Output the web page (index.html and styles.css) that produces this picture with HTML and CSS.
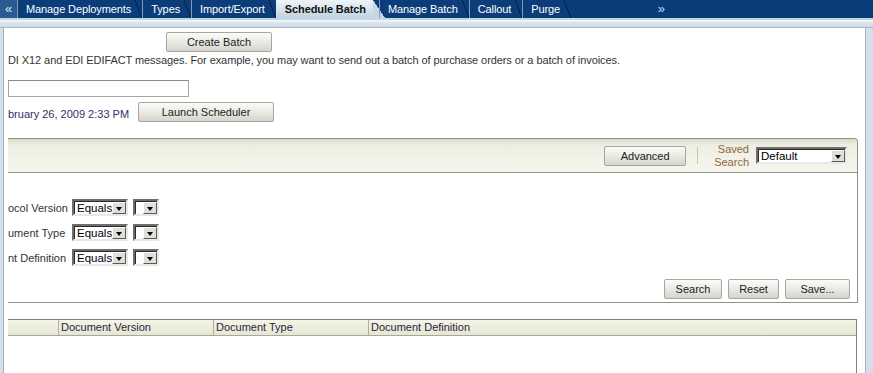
FILE: index.html
```html
<!DOCTYPE html>
<html lang="en">

<head>
    <meta charset="UTF-8">
    <title>Schedule Batch</title>
    <link rel="stylesheet" href="styles.css">
</head>

<body>
    <div class="tabbar">
        <span class="scroll-left">&laquo;</span>
        <span class="tab">Manage Deployments</span>
        <span class="tab">Types</span>
        <span class="tab">Import/Export</span>
        <span class="tab active">Schedule Batch</span>
        <span class="tab">Manage Batch</span>
        <span class="tab">Callout</span>
        <span class="tab">Purge</span>
        <span class="scroll-right">&raquo;</span>
    </div>
    <div class="band"></div>

    <div class="frame">
        <div class="content">
            <div class="create-row">
                <button class="btn create">Create Batch</button>
            </div>
            <p class="desc">DI X12 and EDI EDIFACT messages. For example, you may want to send out a batch of purchase orders or a batch of invoices.</p>
            <div class="text-input"></div>
            <div class="date-row">
                <span class="date">bruary 26, 2009 2:33 PM</span>
                <button class="btn launch">Launch Scheduler</button>
            </div>

            <div class="panel">
                <div class="panel-head">
                    <button class="btn advanced">Advanced</button>
                    <span class="sep"></span>
                    <span class="saved">Saved<br>Search</span>
                    <div class="select wide">
                        <span class="val">Default</span>
                        <span class="arrow"></span>
                    </div>
                </div>
                <div class="panel-body">
                    <div class="crit">
                        <span class="label">ocol Version</span>
                        <div class="select op"><span class="val">Equals</span><span class="arrow"></span></div>
                        <div class="select empty"><span class="val"></span><span class="arrow"></span></div>
                    </div>
                    <div class="crit">
                        <span class="label">ument Type</span>
                        <div class="select op"><span class="val">Equals</span><span class="arrow"></span></div>
                        <div class="select empty"><span class="val"></span><span class="arrow"></span></div>
                    </div>
                    <div class="crit">
                        <span class="label">nt Definition</span>
                        <div class="select op"><span class="val">Equals</span><span class="arrow"></span></div>
                        <div class="select empty"><span class="val"></span><span class="arrow"></span></div>
                    </div>
                    <div class="actions">
                        <button class="btn search">Search</button>
                        <button class="btn reset">Reset</button>
                        <button class="btn save">Save...</button>
                    </div>
                </div>
            </div>

            <div class="results">
                <div class="results-head">
                    <span class="col first"></span>
                    <span class="col">Document Version</span>
                    <span class="col">Document Type</span>
                    <span class="col last">Document Definition</span>
                </div>
                <div class="results-body"></div>
            </div>
        </div>
    </div>
</body>

</html>
```

FILE: styles.css
```css
* {
    box-sizing: border-box;
    margin: 0;
    padding: 0;
}

body {
    width: 873px;
    height: 373px;
    overflow: hidden;
    background: #d3e0ea;
    font-family: 'Liberation Sans', Arial, sans-serif;
    font-size: 11px;
    color: #333;
}

/* top tabs */
.tabbar {
    display: flex;
    height: 18px;
    background: #0b3d7a;
    color: #fff;
    font-size: 11px;
    line-height: 18px;
}

.scroll-left {
    width: 17px;
    text-align: center;
    background: #2a5a90;
    color: #dbe6f2;
    font-size: 13px;
}

.tab {
    position: relative;
    height: 18px;
    padding: 0 11px 0 8px;
    border-left: 1px solid #7d9ab8;
    white-space: nowrap;
    letter-spacing: -0.1px;
}

.tab::after {
    content: "";
    position: absolute;
    top: 0;
    right: 0;
    width: 7px;
    height: 18px;
    background: linear-gradient(to top right, transparent calc(50% - 0.8px), #021a38 50%, transparent calc(50% + 0.8px));
}

.tab.active {
    margin-right: 6px;
    padding: 0 7px 0 9px;
    border-left: none;
    font-weight: bold;
    color: #111;
    background: linear-gradient(#eef4f8, #bfd3e0);
}

.tab.active::after {
    right: -12px;
    width: 12px;
    background: linear-gradient(to top right, #c4d7e3 50%, #0b3d7a 50%);
}

.scroll-right {
    margin-left: auto;
    margin-right: 208px;
    color: #c8d8ea;
    font-size: 13px;
}

.band {
    height: 10px;
    background: linear-gradient(#c5d5e2 0, #c5d5e2 2px, #f4f7fa 2px, #f4f7fa 3px, #dde6ee 4px, #cfdbe5 9px, #a9b9c8 9px);
}

/* main content */
.frame {
    padding: 0 7px 0 3px;
}

.content {
    height: 345px;
    overflow: hidden;
    background: #fff;
    border-left: 1px solid #9fb0c2;
    border-right: 1px solid #a8b2bc;
    padding: 4px 7px 0 4px;
}

.btn {
    height: 20px;
    border: 1px solid #a7a7a0;
    border-radius: 2px;
    background: linear-gradient(#fbfbf9, #e6e6e0 60%, #d4d4cc);
    font-family: 'Liberation Sans', Arial, sans-serif;
    font-size: 11px;
    color: #222;
}

.create-row {
    padding-left: 158px;
}

.create {
    width: 106px;
}

.desc {
    margin-top: 1px;
    line-height: 14px;
    white-space: nowrap;
    letter-spacing: -0.08px;
    color: #333;
}

.text-input {
    width: 181px;
    height: 17px;
    margin-top: 13px;
    border: 1px solid #a5a5a5;
    border-top-color: #8c8c8c;
}

.date-row {
    display: flex;
    align-items: center;
    gap: 10px;
    margin-top: 5px;
}

.date {
    width: 120px;
    padding-top: 4px;
    color: #2f2f6a;
    white-space: nowrap;
}

.launch {
    width: 136px;
}

/* search panel */
.panel {
    margin-top: 16px;
    border-top: 1px solid #8e9286;
    border-right: 1px solid #8e9286;
    border-bottom: 1px solid #8e9286;
    border-top-right-radius: 4px;
}

.panel-head {
    display: flex;
    align-items: center;
    justify-content: flex-end;
    height: 34px;
    padding-right: 10px;
    background: linear-gradient(#d8d8c4, #ecece0 5px, #f3f3ea 20px, #f5f5ee);
    border-bottom: 1px solid #8e9286;
    border-top-right-radius: 4px;
}

.advanced {
    width: 82px;
    height: 20px;
}

.sep {
    width: 1px;
    height: 17px;
    margin: 0 16px 0 11px;
    background: #c8c8b8;
}

.saved {
    color: #8a6a3e;
    text-align: right;
    line-height: 13px;
    margin-right: 7px;
}

.select {
    display: flex;
    align-items: stretch;
    height: 17px;
    border: 2px solid;
    border-color: #6e6e6e #e8e8e8 #e8e8e8 #6e6e6e;
    background: #fff;
    box-shadow: inset 1px 1px 0 #2a2a2a;
}

.select .val {
    flex: 1;
    padding-left: 3px;
    line-height: 14px;
    font-size: 11.5px;
    color: #000;
    overflow: hidden;
}

.select .arrow {
    position: relative;
    width: 14px;
    margin: 1px 0 0;
    background: #e0ded6;
    border: 1px solid;
    border-color: #fff #5a5a5a #5a5a5a #fff;
}

.select .arrow::after {
    content: "";
    position: absolute;
    left: 3px;
    top: 4px;
    border-left: 3.5px solid transparent;
    border-right: 3.5px solid transparent;
    border-top: 4px solid #000;
}

.select.wide {
    width: 91px;
}

.panel-body {
    height: 129px;
    padding-top: 22px;
}

.crit {
    display: flex;
    align-items: center;
    height: 25px;
}

.crit .label {
    width: 64px;
    white-space: nowrap;
    overflow: hidden;
    color: #333;
}

.select.op {
    width: 56px;
}

.select.empty {
    width: 26px;
    margin-left: 5px;
}

.actions {
    display: flex;
    justify-content: flex-end;
    gap: 6px;
    margin-top: 9px;
    padding-right: 7px;
}

.search {
    width: 58px;
}

.reset {
    width: 51px;
}

.save {
    width: 65px;
}

/* results table */
.results {
    margin-top: 16px;
    margin-right: 1px;
    border-top: 1px solid #7e8278;
    border-right: 1px solid #7e8278;
}

.results-head {
    display: flex;
    height: 16px;
    background: linear-gradient(#f4f4e8, #e6e6d4);
    border-bottom: 1px solid #a8a898;
}

.col {
    width: 155px;
    padding-left: 2px;
    line-height: 15px;
    border-left: 1px solid #b0b0a0;
    color: #2a2440;
}

.col.first {
    width: 50px;
    border-left: none;
}

.col.last {
    flex: 1;
}

.results-body {
    height: 60px;
}
```
